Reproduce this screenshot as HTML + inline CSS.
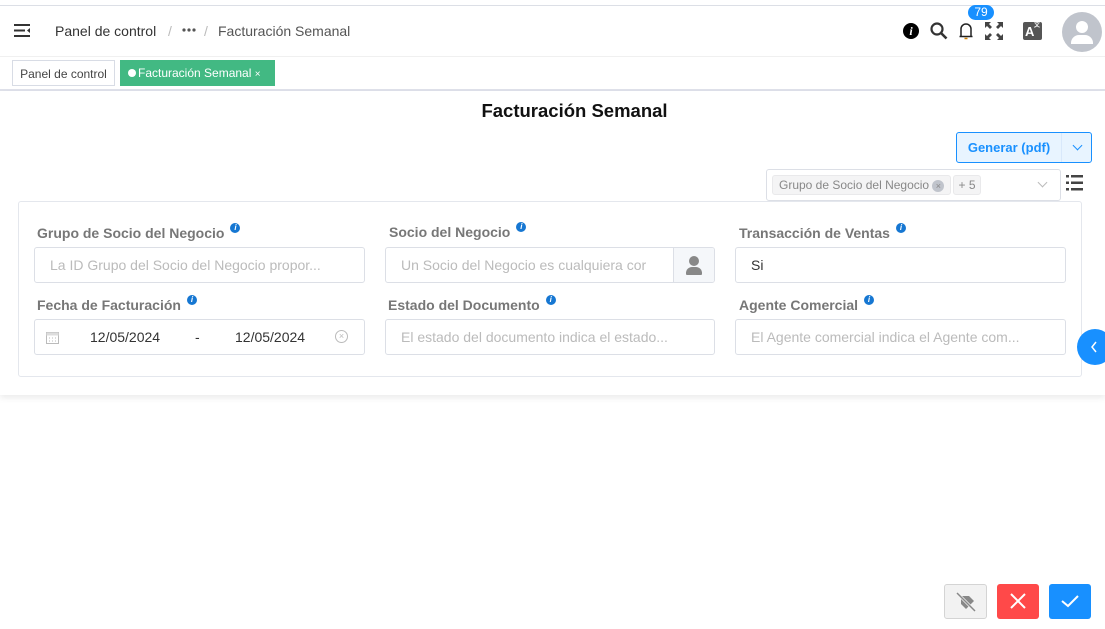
<!DOCTYPE html>
<html><head><meta charset="utf-8"><style>
*{box-sizing:border-box;margin:0;padding:0}
body{width:1105px;height:629px;background:#fff;font-family:"Liberation Sans",Arial,sans-serif;position:relative;overflow:hidden;color:#333}
.abs{position:absolute}
.lbl{position:absolute;font-size:14px;font-weight:bold;color:#777}
.lbl i{display:inline-block;width:10px;height:10px;border-radius:50%;background:#1677d2;color:#fff;font-size:8px;font-style:italic;text-align:center;line-height:10px;vertical-align:top;margin-left:6px;margin-top:-2px}
.inp{position:absolute;height:36px;border:1px solid #dcdfe6;border-radius:3px;font-size:14px;color:#bbb;padding-left:15px;line-height:34px;white-space:nowrap;overflow:hidden;background:#fff}
.chev{position:absolute;width:7px;height:7px;border-right:1px solid;border-bottom:1px solid;transform:rotate(45deg)}
</style></head><body>
<div class="abs" style="left:0;top:5px;width:1105px;height:1px;background:#dcdfe6"></div>
<div class="abs" style="left:0;top:56px;width:1105px;height:1px;background:#f0f0f0"></div>
<svg class="abs" style="left:14px;top:24px" width="17" height="13" viewBox="0 0 17 13"><rect x="0" y="0" width="16" height="2" fill="#333"/><rect x="0" y="5.5" width="11" height="2" fill="#333"/><rect x="0" y="11" width="16" height="2" fill="#333"/><path d="M16 4 L13 6.5 L16 9Z" fill="#333"/></svg>
<div class="abs" style="left:55px;top:23px;font-size:14px;color:#333">Panel de control</div>
<div class="abs" style="left:168px;top:23px;font-size:14px;color:#bbb">/</div>
<svg class="abs" style="left:182px;top:28px" width="14" height="4" fill="#555"><circle cx="2" cy="2" r="1.6"/><circle cx="7" cy="2" r="1.6"/><circle cx="12" cy="2" r="1.6"/></svg>
<div class="abs" style="left:204px;top:23px;font-size:14px;color:#bbb">/</div>
<div class="abs" style="left:218px;top:23px;font-size:14px;color:#555">Facturación Semanal</div>
<div class="abs" style="left:903px;top:23px;width:16px;height:16px;border-radius:50%;background:#000;color:#fff;font:italic bold 12px 'Liberation Serif',serif;text-align:center;line-height:16px">i</div>
<svg class="abs" style="left:930px;top:22px" width="18" height="18"><circle cx="7" cy="7" r="5.5" stroke="#333" stroke-width="2.2" fill="none"/><path d="M11 11L16.5 16.5" stroke="#333" stroke-width="2.6"/></svg>
<svg class="abs" style="left:958px;top:21px" width="16" height="19"><path d="M3 15V8a5 5 0 0 1 10 0v7M1.5 15.5h13" stroke="#222" stroke-width="1.5" fill="none"/><path d="M6.5 17.5h3" stroke="#d08000" stroke-width="1.5"/></svg>
<div class="abs" style="left:968px;top:5px;width:26px;height:15px;border-radius:8px;background:#1890ff;color:#fff;font-size:12px;text-align:center;line-height:15px">79</div>
<svg class="abs" style="left:985px;top:22px" width="18" height="18" fill="#444"><path d="M0 0h6L4 2l3 3-2 2-3-3-2 2zM18 0v6l-2-2-3 3-2-2 3-3-2-2zM0 18v-6l2 2 3-3 2 2-3 3 2 2zM18 18h-6l2-2-3-3 2-2 3 3 2-2z"/></svg>
<div class="abs" style="left:1023px;top:22px;width:19px;height:18px;background:#555;border-radius:2px;color:#fff;font-size:13px;font-weight:bold;padding-left:2px;line-height:20px">A<span class="abs" style="left:11px;top:1px;font-size:6px;line-height:7px">文</span></div>
<div class="abs" style="left:1062px;top:12px;width:40px;height:40px;border-radius:50%;background:#c0c4cc;overflow:hidden"><div class="abs" style="left:14px;top:9px;width:12px;height:12px;border-radius:50%;background:#fff"></div><div class="abs" style="left:9px;top:23px;width:22px;height:9px;border-radius:8px 8px 0 0;background:#fff"></div></div>
<div class="abs" style="left:12px;top:60px;width:103px;height:26px;border:1px solid #d8dce5;font-size:12px;color:#444;line-height:26px;text-align:center">Panel de control</div>
<div class="abs" style="left:120px;top:60px;width:155px;height:26px;background:#42b983;color:#fff;font-size:12px;line-height:27px;padding-left:8px"><span style="display:inline-block;width:8px;height:8px;border-radius:50%;background:#fff;margin-right:2px"></span>Facturación Semanal <span style="font-size:10px">×</span></div>
<div class="abs" style="left:0;top:89px;width:1105px;height:2px;background:#dfe1ea"></div>
<div class="abs" style="left:0;top:91px;width:1105px;height:304px;box-shadow:0 3px 6px rgba(0,0,0,0.08)"></div>
<div class="abs" style="left:0;top:100px;width:1105px;text-align:center;font-size:18.5px;font-weight:bold;color:#111;padding-left:44px">Facturación Semanal</div>
<div class="abs" style="left:956px;top:132px;width:136px;height:31px;border:1px solid #1890ff;border-radius:3px;background:#e8f4ff"><div class="abs" style="left:0;top:0;width:104px;text-align:center;line-height:30px;font-size:13px;font-weight:bold;color:#1890ff">Generar (pdf)</div><div class="abs" style="left:104px;top:0;width:1px;height:29px;background:#d8e8fb"></div><div class="chev" style="left:117px;top:9px;color:#1890ff"></div></div>
<div class="abs" style="left:766px;top:169px;width:295px;height:32px;border:1px solid #dcdfe6;border-radius:3px"><div class="abs" style="left:5px;top:5px;height:20px;padding:0 6px;background:#f4f4f5;border:1px solid #e9e9eb;border-radius:3px;font-size:12px;color:#888;line-height:19px">Grupo de Socio del Negocio <span style="display:inline-block;width:12px;height:12px;border-radius:50%;background:#c0c4cc;color:#888;font-size:9px;text-align:center;line-height:12px">×</span></div><div class="abs" style="left:186px;top:5px;height:20px;width:28px;background:#f4f4f5;border:1px solid #e9e9eb;border-radius:3px;font-size:12px;color:#888;line-height:19px;text-align:center">+ 5</div><div class="chev" style="left:272px;top:9px;color:#bbb"></div></div>
<svg class="abs" style="left:1066px;top:175px" width="17" height="16" fill="#444"><rect x="0" y="0" width="3" height="2.5"/><rect x="5" y="0" width="12" height="2.5"/><rect x="0" y="6.5" width="3" height="2.5"/><rect x="5" y="6.5" width="12" height="2.5"/><rect x="0" y="13" width="3" height="2.5"/><rect x="5" y="13" width="12" height="2.5"/></svg>
<div class="abs" style="left:18px;top:201px;width:1064px;height:176px;border:1px solid #e4e7ed;border-radius:3px"></div>
<div class="lbl" style="left:37px;top:225px">Grupo de Socio del Negocio<i>i</i></div>
<div class="lbl" style="left:389px;top:224px">Socio del Negocio<i>i</i></div>
<div class="lbl" style="left:739px;top:225px">Transacción de Ventas<i>i</i></div>
<div class="lbl" style="left:37px;top:297px">Fecha de Facturación<i>i</i></div>
<div class="lbl" style="left:388px;top:297px">Estado del Documento<i>i</i></div>
<div class="lbl" style="left:739px;top:297px">Agente Comercial<i>i</i></div>
<div class="inp" style="left:34px;top:247px;width:331px">La ID Grupo del Socio del Negocio propor...</div>
<div class="inp" style="left:385px;top:247px;width:330px;padding-right:45px">Un Socio del Negocio es cualquiera cor<div class="abs" style="right:0;top:0;width:41px;height:34px;background:#f5f7fa;border-left:1px solid #dcdfe6"><div class="abs" style="left:15px;top:8px;width:10px;height:10px;border-radius:50%;background:#888"></div><div class="abs" style="left:12px;top:19px;width:16px;height:8px;border-radius:6px 6px 1px 1px;background:#888"></div></div></div>
<div class="inp" style="left:735px;top:247px;width:331px;color:#333">Si</div>
<div class="inp" style="left:34px;top:319px;width:331px;color:#333"><svg class="abs" style="left:11px;top:11px" width="13" height="13"><rect x="0.5" y="1.5" width="12" height="11" fill="none" stroke="#bbb"/><rect x="0.5" y="1.5" width="12" height="3" fill="#ddd"/><path d="M3 7h1M6 7h1M9 7h1M3 10h1M6 10h1M9 10h1" stroke="#bbb"/></svg><span class="abs" style="left:55px">12/05/2024</span><span class="abs" style="left:160px">-</span><span class="abs" style="left:200px">12/05/2024</span><span class="abs" style="left:300px;top:10px;width:13px;height:13px;border:1px solid #bbb;border-radius:50%;font-size:9px;line-height:11px;text-align:center;color:#bbb">×</span></div>
<div class="inp" style="left:385px;top:319px;width:330px">El estado del documento indica el estado...</div>
<div class="inp" style="left:735px;top:319px;width:331px">El Agente comercial indica el Agente com...</div>
<div class="abs" style="left:1077px;top:329px;width:36px;height:36px;border-radius:50%;background:#1890ff"></div>
<svg class="abs" style="left:1089px;top:340px" width="10" height="14"><path d="M7 2L3 7l4 5" stroke="#fff" stroke-width="1.5" fill="none"/></svg>
<div class="abs" style="left:944px;top:584px;width:43px;height:35px;background:#f2f2f2;border:1px solid #d4d4d4;border-radius:3px"></div>
<svg class="abs" style="left:954px;top:590px" width="24" height="24"><path d="M7 6l8 0 5 5-8 8-5-5z" fill="#888"/><path d="M3 3l18 18" stroke="#f2f2f2" stroke-width="3"/><path d="M3 3l18 18" stroke="#888" stroke-width="1.5"/></svg>
<div class="abs" style="left:997px;top:584px;width:42px;height:35px;background:#ff4949;border-radius:3px"></div>
<svg class="abs" style="left:1009px;top:592px" width="18" height="18"><path d="M2 2L16 16M16 2L2 16" stroke="#fff" stroke-width="2"/></svg>
<div class="abs" style="left:1049px;top:584px;width:42px;height:35px;background:#1890ff;border-radius:3px"></div>
<svg class="abs" style="left:1060px;top:592px" width="20" height="18"><path d="M2 9l6 5L18 4" stroke="#fff" stroke-width="2" fill="none"/></svg>
</body></html>
